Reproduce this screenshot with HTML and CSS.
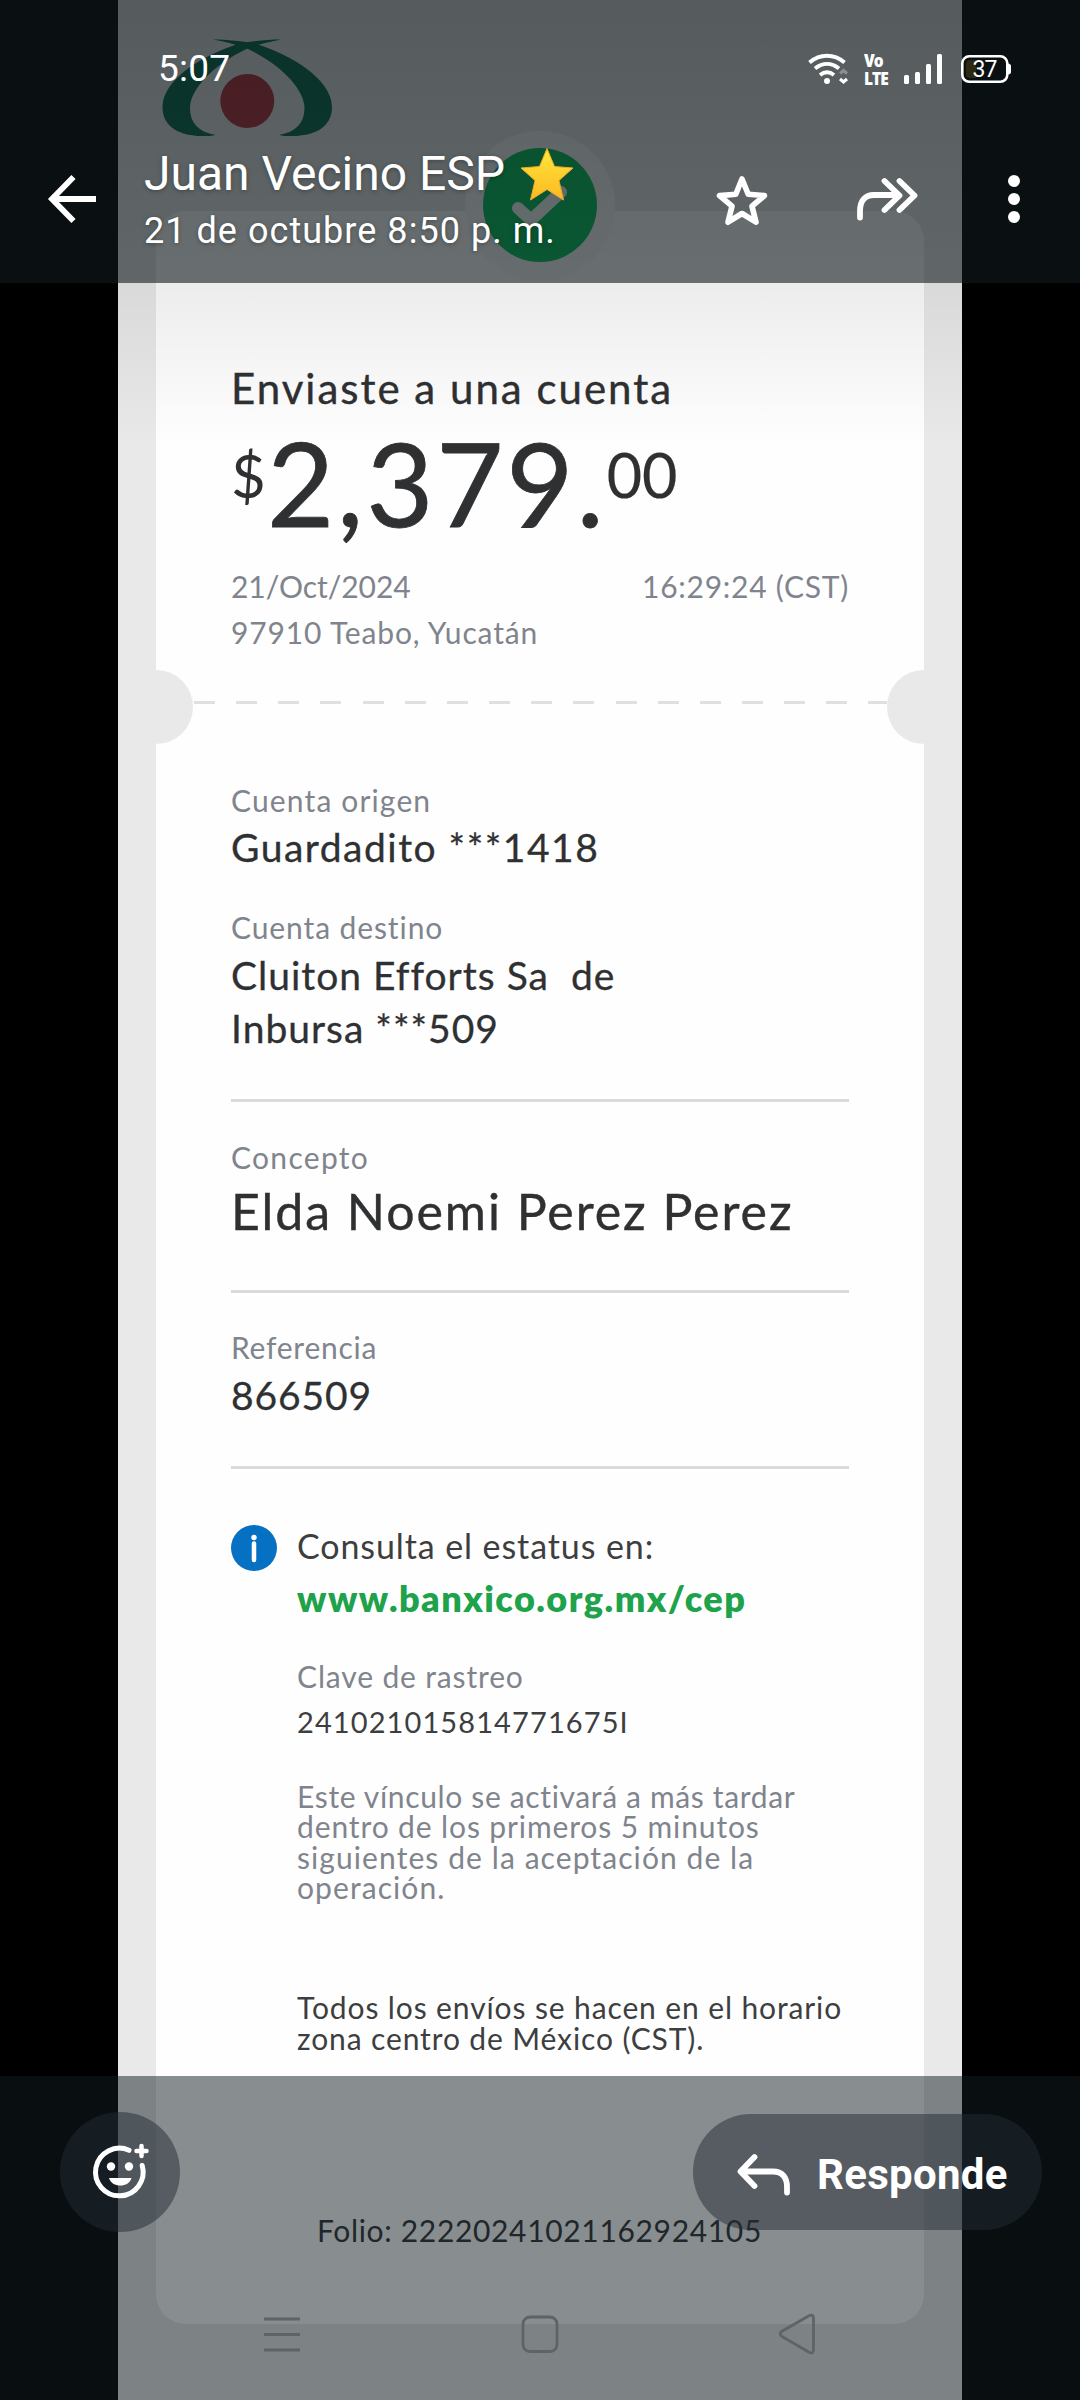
FILE: index.html
```html
<!DOCTYPE html>
<html lang="es">
<head>
<meta charset="utf-8">
<title>Juan Vecino ESP</title>
<link rel="stylesheet" href="styles.css">
</head>
<body>
<div class="viewer">
  <main class="photo">
    <svg class="logo" viewBox="0 0 190 115" width="190" height="115">
      <g fill="#00684b">
        <path d="M58 9.500C72 9.500 88 11 101 14C135 24 177 49 177 77C177 98 158 106 138 106C132 106 127 106 124 105C141 102 149.500 93 149.500 78C149.500 60 127 35 92 18.500C80 14 68 11.500 58 9.500Z"/>
        <path transform="matrix(-1 0 0 1 184.500 0)" d="M58 9.500C72 9.500 88 11 101 14C135 24 177 49 177 77C177 98 158 106 138 106C132 106 127 106 124 105C141 102 149.500 93 149.500 78C149.500 60 127 35 92 18.500C80 14 68 11.500 58 9.500Z"/>
      </g>
      <circle cx="92.300" cy="71" r="27" fill="#b82c38"/>
    </svg>
    <section class="receipt">
      <svg class="badge" viewBox="0 0 150 150" width="150" height="150">
        <circle cx="75" cy="75" r="75" fill="#f8f8f8"/>
        <circle cx="75" cy="74" r="57" fill="#00c058"/>
        <path d="M53 77L66 89L96 61" fill="none" stroke="#f4f8f5" stroke-width="12" stroke-linecap="round" stroke-linejoin="round"/>
      </svg>
      <h1 class="heading">Enviaste a una cuenta</h1>
      <div class="amount"><span class="currency">$</span><span class="units">2,379.</span><span class="cents">00</span></div>
      <div class="when"><span class="date">21/Oct/2024</span><span class="time">16:29:24 (CST)</span></div>
      <p class="place">97910 Teabo, Yucatán</p>
      <div class="tear"><i class="dashes"></i></div>
      <p class="label origin">Cuenta origen</p>
      <p class="value guard">Guardadito ***1418</p>
      <p class="label dest">Cuenta destino</p>
      <p class="value payee">Cluiton Efforts Sa&nbsp; de<br>Inbursa ***509</p>
      <hr class="rule">
      <p class="label concept">Concepto</p>
      <p class="person">Elda Noemi Perez Perez</p>
      <hr class="rule">
      <p class="label ref">Referencia</p>
      <p class="value refnum">866509</p>
      <hr class="rule">
      <div class="status">
        <svg class="info" viewBox="0 0 46 46" width="46" height="46"><circle cx="23" cy="23" r="23" fill="#0670c2"/><circle cx="23" cy="12.500" r="2.700" fill="#fff"/><path d="M23 18.500V35" stroke="#fff" stroke-width="4.500" stroke-linecap="round"/></svg>
        <div class="status-body">
          <p class="consult">Consulta el estatus en:</p>
          <p class="link">www.banxico.org.mx/cep</p>
          <p class="label track">Clave de rastreo</p>
          <p class="code">241021015814771675I</p>
          <p class="note"><span class="line-a">Este vínculo se activará a más tardar</span><br>dentro de los primeros 5 minutos<br><span class="line-c">siguientes de la aceptación de la<br>operación.</span></p>
          <p class="hours">Todos los envíos se hacen en el horario<br>zona centro de México (CST).</p>
        </div>
      </div>
      <p class="folio">Folio: 22220241021162924105</p>
    </section>
  </main>

  <div class="shade"></div>

  <header class="top">
    <div class="statusbar">
      <span class="clock">5:07</span>
      <svg viewBox="0 0 42 32" width="42" height="32" class="wifi"><g fill="none" stroke="#fff" stroke-width="4"><path d="M1.500 9.500C12 0.500 26 0.500 36.500 9.500"/><path d="M7 15.500C14.500 9.500 23.500 9.500 31 15.500"/><path d="M12 22C16.500 18.500 21.500 18.500 26 22"/></g><circle cx="19" cy="28" r="3" fill="#fff"/><path d="M32 20.500L35.500 17.500L39 20.500" fill="none" stroke="#8b8f92" stroke-width="3"/><path d="M32 26L35.500 29L39 26" fill="none" stroke="#fff" stroke-width="3"/></svg>
      <div class="volte"><span>Vo</span><span>LTE</span></div>
      <svg viewBox="0 0 38 32" width="38" height="32" class="bars"><g fill="#fff"><rect x="0" y="22" width="5" height="9" rx="1.500"/><rect x="11" y="19" width="5" height="12" rx="1.500"/><rect x="22" y="11" width="5" height="20" rx="1.500"/><rect x="33" y="1" width="5" height="30" rx="1.500"/></g></svg>
      <svg viewBox="0 0 50 30" width="50" height="30"><rect x="1.300" y="2.300" width="45" height="25.500" rx="7" fill="none" stroke="#fff" stroke-width="2.600"/><path d="M9 6H15V24H9Q5 24 5 20V10Q5 6 9 6Z" fill="#2e2813"/><path d="M47 9.500Q50 10 50 12V18Q50 20 47 20.500Z" fill="#fff"/><text x="11.500" y="23" fill="#fff" font-family="Roboto, sans-serif" font-size="23" textLength="25" lengthAdjust="spacing">37</text></svg>
    </div>
    <div class="actions">
      <svg class="back" viewBox="0 0 48 48" width="48" height="48"><path d="M25.500 2L4 24L25.500 46M4.500 24H48" fill="none" stroke="#fff" stroke-width="5.800"/></svg>
      <div class="titles">
        <div class="name">Juan Vecino ESP<svg class="gold" viewBox="0 0 54 54" width="54" height="54"><defs><linearGradient id="g" x1="0" y1="0" x2="0" y2="1"><stop offset="0" stop-color="#ffe83a"/><stop offset="1" stop-color="#fcb821"/></linearGradient></defs><path d="M27 1.500L34.500 19.500L53 21L39 33.500L43.500 53L27 42.500L10.500 53L15 33.500L1 21L19.500 19.500Z" fill="url(#g)" stroke="#eea92a" stroke-width="1" stroke-linejoin="round"/></svg></div>
        <div class="sent">21 de octubre 8:50 p. m.</div>
      </div>
      <svg class="fav" viewBox="0 0 54 54" width="54" height="54"><path d="M27 5L33.200 20.300L49.500 21.600L37 32.200L41 48.200L27 39.500L13 48.200L17 32.200L4.500 21.600L20.800 20.300Z" fill="none" stroke="#fff" stroke-width="5.600" stroke-linejoin="round"/></svg>
      <svg class="forward" viewBox="0 0 62 46" width="62" height="46"><path d="M4 40.500V34C4 24 9 18 18 18H42M28.500 4L43.500 18.500L28.500 33M43.500 4L58.500 18.500L43.500 33" fill="none" stroke="#fff" stroke-width="5.800" stroke-linecap="round" stroke-linejoin="round"/></svg>
      <svg class="more" viewBox="0 0 12 48" width="12" height="48"><g fill="#fff"><circle cx="6" cy="6" r="6"/><circle cx="6" cy="24" r="6"/><circle cx="6" cy="42" r="6"/></g></svg>
    </div>
  </header>

  <footer class="bottom">
    <div class="replybar">
      <div class="react"><svg viewBox="0 0 56 58" width="56" height="58"><path d="M35 7.300A23.800 23.800 0 1 0 48.200 22.500" fill="none" stroke="#fff" stroke-width="5" stroke-linecap="round"/><path d="M47.500 3V13M42.500 8H52.500" stroke="#fff" stroke-width="4.500" stroke-linecap="round"/><circle cx="17" cy="23.500" r="4.200" fill="#fff"/><circle cx="35" cy="23.500" r="4.200" fill="#fff"/><path d="M15 35H37.500C35 45 17.500 45 15 35Z" fill="#fff"/></svg></div>
      <div class="reply"><svg viewBox="0 0 54 44" width="54" height="44"><path d="M50 39.500V34C50 24 45 18.500 36 18.500H4M17.500 4L3.500 18.500L17.500 33" fill="none" stroke="#fff" stroke-width="5.800" stroke-linecap="round" stroke-linejoin="round"/></svg><span>Responde</span></div>
    </div>
    <nav class="nav">
      <svg viewBox="0 0 36 40" width="36" height="40"><path d="M0 5H36M0 20.500H36M0 36H36" stroke="#5f6365" stroke-width="3"/></svg>
      <svg class="home" viewBox="0 0 38 40" width="38" height="40"><rect x="2" y="3" width="34" height="34.500" rx="7" fill="none" stroke="#5f6365" stroke-width="2.800"/></svg>
      <svg viewBox="0 0 38 42" width="38" height="42"><path d="M3.500 18.500L31 2.800Q35.500 0.800 35.500 5V37Q35.500 41.200 31 39.200L3.500 23.200Q1 20.800 3.500 18.500Z" fill="none" stroke="#5f6365" stroke-width="2.800"/></svg>
    </nav>
  </footer>
</div>
</body>
</html>
```
FILE: styles.css
```css
* { box-sizing: border-box; }
body { margin: 0; background: #000; }
p, h1 { margin: 0; font-weight: 400; }
svg { display: block; flex: none; overflow: visible; }

.viewer { position: relative; width: 1080px; height: 2400px; overflow: hidden; background: #000; }

/* received picture */
.photo {
  position: relative; width: 844px; height: 2400px; margin: 0 auto; padding: 211px 38px 0 38px;
  background: #e9e9e9; color: #2f3032; font-family: Lato, sans-serif; white-space: nowrap;
}
.logo { position: absolute; left: 37px; top: 30px; }
.receipt { position: relative; height: 2113px; padding: 152px 75px 0 75px; border-radius: 30px; background: #fefefe; }
.badge { position: absolute; left: 309px; top: -80px; }

.heading { font-size: 42px; line-height: 50px; letter-spacing: 2px; -webkit-text-stroke: .4px; }
.amount { display: flex; margin-top: 12px; height: 115px; -webkit-text-stroke: .8px; }
.currency { width: 36px; margin-top: 20px; font-size: 60px; line-height: 60px; -webkit-text-stroke: 0; }
.units { font-size: 116px; line-height: 116px; letter-spacing: 2.8px; }
.cents { margin: 20px 0 0 0; font-size: 61px; line-height: 60px; -webkit-text-stroke: .2px; }
.when { display: flex; justify-content: space-between; margin-top: 28px; font-size: 30px; line-height: 36px; color: #80848d; }
.date { letter-spacing: -.05px; }
.time { letter-spacing: .75px; }
.place { margin-top: 10px; font-size: 30px; line-height: 36px; letter-spacing: .85px; color: #80848d; }

.tear { display: flex; justify-content: space-between; height: 74px; margin: 20px -75px 0 -75px; }
.tear::before, .tear::after { content: ""; width: 37px; background: #e9e9e9; }
.tear::before { border-radius: 0 37px 37px 0; }
.tear::after { border-radius: 37px 0 0 37px; }
.dashes { width: 693px; height: 3px; margin-top: 31px; background: repeating-linear-gradient(90deg, #e0e0e0 0 21px, transparent 21px 42.150px); }

.label { font-size: 30px; line-height: 36px; color: #80848d; }
.value { font-size: 39px; -webkit-text-stroke: .3px; }
.origin { margin-top: 38px; letter-spacing: 1.15px; }
.guard { margin-top: 6px; line-height: 46px; letter-spacing: 1.5px; }
.dest { margin-top: 39px; letter-spacing: .9px; }
.payee { margin-top: 4px; line-height: 53px; letter-spacing: 1px; }
.rule { height: 3px; margin: 44px 0 0; border: 0; background: #dadada; }
.concept { margin-top: 37px; letter-spacing: 1.3px; }
.person { margin-top: 6px; font-size: 50px; line-height: 60px; letter-spacing: 1.95px; -webkit-text-stroke: .4px; }
.person + .rule { margin-top: 49px; }
.ref { margin-top: 36px; letter-spacing: .75px; }
.refnum { margin-top: 7px; line-height: 46px; letter-spacing: .9px; }
.refnum + .rule { margin-top: 48px; }

.status { display: flex; gap: 20px; margin-top: 56px; }
.consult { font-size: 34px; line-height: 42px; letter-spacing: .9px; color: #3d3e40; }
.link { margin-top: 10px; font-size: 36px; line-height: 42px; font-weight: 800; letter-spacing: 1.45px; color: #1ea24b; }
.track { margin-top: 39px; letter-spacing: .85px; }
.code { margin-top: 10px; font-size: 29px; line-height: 36px; letter-spacing: 1.1px; color: #3d3e40; }
.note { margin-top: 41px; font-size: 30px; line-height: 30.250px; letter-spacing: .88px; color: #80848d; }
.line-a { letter-spacing: .65px; }
.line-c { letter-spacing: 1.08px; }
.hours { margin-top: 90px; font-size: 30px; line-height: 30.500px; letter-spacing: .88px; color: #3d3e40; }
.folio { margin: 159px 0 0 86px; font-size: 30px; line-height: 36px; letter-spacing: .66px; }

/* viewer chrome over the picture */
.shade { position: absolute; left: 0; top: 0; width: 100%; height: 447px; background: linear-gradient(rgba(0,0,0,.19), rgba(0,0,0,0)); }
.top {
  position: absolute; left: 0; top: 0; width: 100%; height: 283px; padding-top: 47px;
  background: rgba(17,26,30,.6); color: #fff; font-family: Roboto, sans-serif;
}
.statusbar { display: flex; align-items: center; height: 44px; padding: 0 69px 0 158px; }
.clock { flex: 1; font-size: 37px; line-height: 46px; letter-spacing: .2px; }
.wifi { margin-right: 14px; }
.volte { display: flex; flex-direction: column; width: 22px; margin-right: 18px; font-size: 15.500px; line-height: 15.500px; font-weight: 800; transform: scaleY(1.150); font-family: "Open Sans", sans-serif; letter-spacing: -1px; }
.bars { margin-right: 19px; }
.actions { display: flex; align-items: center; height: 107px; margin-top: 55px; padding: 0 60px 0 48px; }
.back { margin-bottom: 1px; }
.titles { flex: 1; margin-left: 48px; white-space: nowrap; text-shadow: 0 1px 4px rgba(0,0,0,.35); }
.name { display: flex; font-size: 48px; line-height: 56px; }
.gold { margin: 1px 0 0 15px; }
.sent { margin-top: 7px; font-size: 36px; line-height: 44px; letter-spacing: 1.040px; }
.fav { margin: 3px 87px 0 0; }
.forward { margin-right: 90px; }
.more { margin-bottom: 1px; }

.bottom { position: absolute; left: 0; bottom: 0; width: 100%; height: 324px; padding-top: 36px; background: rgba(17,27,31,.5); }
.replybar { display: flex; justify-content: space-between; align-items: center; height: 120px; padding: 0 38px 0 60px; }
.react, .reply { display: flex; align-items: center; background: rgba(35,43,52,.5); }
.react { width: 120px; height: 120px; padding-left: 34px; border-radius: 60px; }
.reply { width: 349px; height: 116px; padding: 5px 0 0 44px; gap: 26px; border-radius: 58px; color: #fff; font: 700 42px/50px Roboto, sans-serif; letter-spacing: .3px; }
.nav { display: flex; justify-content: space-between; align-items: center; height: 42px; margin-top: 81px; padding: 0 264px 0 264px; }
.home { margin-left: 2px; }
```
